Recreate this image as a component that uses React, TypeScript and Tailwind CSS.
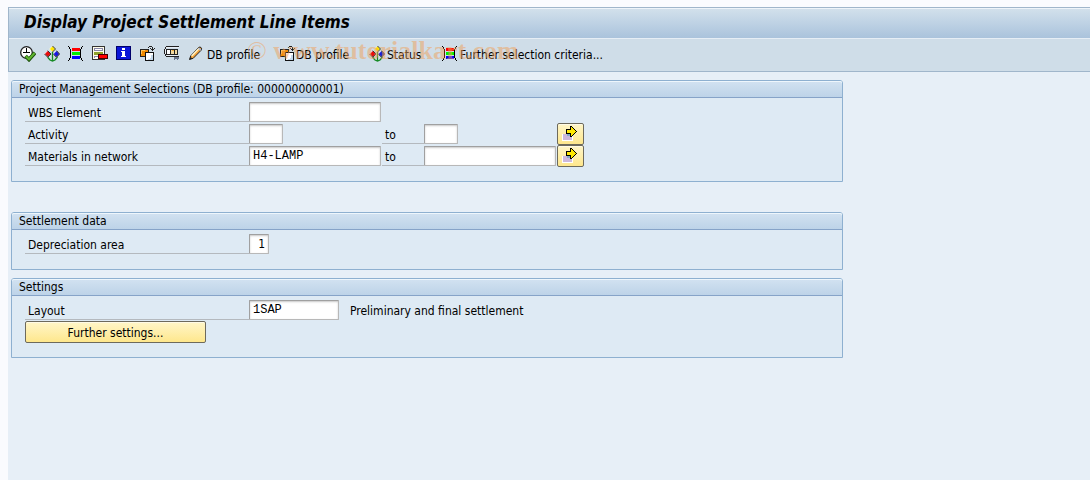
import { useState, type ChangeEvent, type ReactNode } from "react";

function Pixels({ children }: { children: ReactNode }) {
  return (
    <svg viewBox="0 0 16 16" aria-hidden="true" shapeRendering="crispEdges" className="h-4 w-4 shrink-0">
      {children}
    </svg>
  );
}

function ExecuteIcon() {
  return (
    <svg viewBox="0 0 16 16" aria-hidden="true" className="h-4 w-4 shrink-0">
      <circle cx="6.5" cy="6.5" r="5.8" fill="#fff" stroke="#222" strokeWidth="1.3" />
      <path d="M6.5 2v5M3 6.5h7" stroke="#000" fill="none" />
      <path d="M5.5 10l3.5 3.5L15 6.8" fill="none" stroke="#1d4f0c" strokeWidth="3.8" />
      <path d="M5.8 10.2L9 13.2l5.6-6.2" fill="none" stroke="#5fb52f" strokeWidth="2" />
    </svg>
  );
}

function StatusIcon() {
  return (
    <svg viewBox="0 0 16 16" aria-hidden="true" className="h-4 w-4 shrink-0">
      <path d="M8.5 6v9.5M3.5 11l2.5 3 2.5 1L11 14l2.5-3" fill="none" stroke="#168a24" strokeWidth="1.3" />
      <path d="M8.5 0L5.5 3l3 3 3-3z" fill="#ffe600" stroke="#fff" strokeWidth="0.6" />
      <path d="M8.5 0l3 3-3 3" fill="none" stroke="#333" />
      <path d="M3.7 4.7L.5 8l3.2 3.2L7 8z" fill="#e80c0c" stroke="#fff" strokeWidth="0.6" />
      <path d="M3.7 4.7L7 8l-3.3 3.2L.5 8" fill="none" stroke="#333" />
      <path d="M12.5 4.7L9.3 8l3.2 3.2L15.6 8z" fill="#1616e8" stroke="#fff" strokeWidth="0.6" />
      <path d="M12.5 4.7L15.5 8l-3 3.2L9.3 8" fill="none" stroke="#222" />
    </svg>
  );
}

function SelectionIcon() {
  return (
    <Pixels>
      <path d="M0 0h1v1h-1zM1 1h1v2h-1zM2 3h1v9h-1zM1 12h1v2h-1zM0 14h1v1h-1zM15 0h-1v1h1zM14 1h-1v2h1zM13 3h-1v9h1zM14 12h-1v2h1zM15 14h-1v1h1z" fill="#000" />
      <path d="M4 2h8v3h-8z" fill="#f00" />
      <path d="M4 6h8v3h-8z" fill="#0e0" />
      <path d="M4 10h8v3h-8z" fill="#00f" />
    </Pixels>
  );
}

function DeleteRowIcon() {
  return (
    <Pixels>
      <path d="M0 0h13v14h-13z" fill="#333" />
      <path d="M1 1h11v12h-11z" fill="#fffde9" />
      <path d="M2 2h9v3h-9z" fill="#8886a8" />
      <path d="M3 3h7v1h-7z" fill="#fff" />
      <path d="M2 6h9v3h-9z" fill="#8fa32c" />
      <path d="M2 10h4v2h-4z" fill="#8b89aa" />
      <path d="M3 11h3v1h-3z" fill="#fff" />
      <path d="M6 8h10v5h-10z" fill="#400" />
      <path d="M7 9h8v3h-8z" fill="#f00" />
    </Pixels>
  );
}

function InfoIcon() {
  return (
    <Pixels>
      <path d="M0 0h15v14h-15z" fill="#00006c" />
      <path d="M1 1h13v12h-13z" fill="#0a16d8" />
      <path d="M6 2h3v2h-3zM5 5h4v5h1v1h-5v-1h1v-4h-1z" fill="#fff" />
    </Pixels>
  );
}

function VariantIcon() {
  return (
    <Pixels>
      <path d="M0 3h9v8h-9z" fill="#222" />
      <path d="M1 4h7v6h-7z" fill="#f08a00" />
      <path d="M1 4h4v1h-3v3h-1z" fill="#ffc45c" />
      <path d="M5 6h9v9h-9z" fill="#111" />
      <path d="M6 7h7v7h-7z" fill="#fff" />
      <path d="M11 9h2v5h-5v-1h2v-1h1z" fill="#c3d8ea" />
      <path d="M8 1h1v1h-1zM9 0h3v1h-3zM12 1h1v2h-1zM10 2h1v1h-1zM11 3h3v1h-3zM14 2h1v1h-1zM12 4h1v1h-1z" fill="#222" />
    </Pixels>
  );
}

function TransportIcon() {
  return (
    <Pixels>
      <path d="M2 0h13v1h-13zM1 1h1v2h-1zM0 3h1v5h-1zM1 8h1v2h-1zM2 10h13v1h-13z" fill="#222" />
      <path d="M2 1h13v1h-13zM1 3h1v5h-1zM2 9h12v1h-12z" fill="#e9eef6" />
      <path d="M2 3h12v6h-12z" fill="#222" />
      <path d="M3 4h3v4h-3z" fill="#fff" />
      <path d="M7 4h3v4h-3zM11 4h2v4h-2z" fill="#f2d9a0" />
      <path d="M8 4h2v1h-2z" fill="#eda93a" />
      <path d="M10 11h5v2h-5zM10 13h1v1h-1zM13 13h1v1h-1z" fill="#69758e" />
    </Pixels>
  );
}

function PencilIcon() {
  return (
    <svg viewBox="0 0 16 16" aria-hidden="true" className="h-4 w-4 shrink-0">
      <path d="M1.5 13.5l1.2-3.6L10.5 1.6q1.5-1.2 2.6 0t0 2.7L5.2 12.3z" fill="#f3a33c" stroke="#222" />
      <path d="M3.7 10l7.2-7.5" stroke="#fff3c6" strokeWidth="1.6" />
      <path d="M1.5 13.5l1-2.6 2 1.6z" fill="#222" />
      <path d="M10.8 2.2l2 2" stroke="#a9b9d8" strokeWidth="1.6" />
    </svg>
  );
}

function MultipleIcon() {
  return (
    <Pixels>
      <path d="M0 8h11v7h-11z" fill="#fff" />
      <path d="M1 8h9v6h-9z" fill="#cdb9dc" />
      <path d="M5 8h5v2h-5z" fill="#86aac4" />
      <path d="M8 0h2v1h1v1h1v1h1v1h1v1h1v1h-1v1h-1v1h-1v1h-1v1h-1v1h-2v-3h-4v-5h4z" fill="#000" />
      <path d="M9 1h1v1h1v1h1v1h1v1h1v1h-1v1h-1v1h-1v1h-1v1h-1v-3h-4v-3h4z" fill="#ffe800" />
    </Pixels>
  );
}

function Group({ title, className = "", children }: { title: string; className?: string; children: ReactNode }) {
  return (
    <section className={`w-full max-w-[832px] rounded-t-[3px] border border-[#8eb0d0] bg-[#deeaf4] ${className}`}>
      <h2 className="h-[17px] rounded-t-[2px] border-b border-[#86a3c8] bg-linear-to-b from-[#d2e2f1] to-[#bdd3e8] pl-[7px] leading-4 shadow-[inset_0_1px_0_#eef6fc]">
        {title}
      </h2>
      <div className="pt-[3px] pb-[14px] pl-[13px]">{children}</div>
    </section>
  );
}

const ROW = "grid h-[22px] grid-cols-[224px_133px_42px_133px_auto] items-center";
const LABEL = "flex h-5 items-center border-b border-[#b4b9be] pt-[2px] pl-[3px]";
const FIELD =
  "h-5 rounded-[1px] border border-[#a0a0a0] border-r-[#b8b8b8] border-b-[#b8b8b8] bg-white px-[3px] text-xs shadow-[inset_0_1px_2px_#c8c8c8] outline-none";
const MONO = "font-['Liberation_Mono',monospace]";
const BUTTON =
  "rounded-[2px] border border-[#6d6a5c] bg-linear-to-b from-[#fff6c8] to-[#fee78c] shadow-[inset_0_1px_0_#fffbe6]";

function MultipleButton({ label }: { label: string }) {
  return (
    <button type="button" aria-label={label} className={`flex h-[22px] w-[27px] items-center pl-1 ${BUTTON}`}>
      <MultipleIcon />
    </button>
  );
}

const ICON_TOOLS = [
  { label: "Execute", icon: <ExecuteIcon /> },
  { label: "Status", icon: <StatusIcon /> },
  { label: "Dynamic selections", icon: <SelectionIcon /> },
  { label: "Delete row", icon: <DeleteRowIcon /> },
  { label: "Information", icon: <InfoIcon /> },
  { label: "Get variant", icon: <VariantIcon /> },
  { label: "Transport", icon: <TransportIcon /> },
];

export default function App() {
  const [form, setForm] = useState({
    wbs: "",
    activityFrom: "",
    activityTo: "",
    materialFrom: "H4-LAMP",
    materialTo: "",
    area: "1",
    layout: "1SAP",
  });

  function field(name: keyof typeof form) {
    return {
      id: name,
      value: form[name],
      onChange: (e: ChangeEvent<HTMLInputElement>) => setForm({ ...form, [name]: e.target.value }),
    };
  }

  return (
    <div className="flex min-h-screen flex-col bg-[#fafbfe] pt-[7px] pl-2 font-['DejaVu_Sans_Condensed','DejaVu_Sans',sans-serif] text-xs text-black">
      <div className="flex-1 bg-[#e7eff7]">
        <header className="border border-r-0 border-[#a0b6cb] bg-[#cfdde8]">
          <h1 className="flex h-[30px] items-center bg-linear-to-b from-[#d3e1ec] to-[#aac3dc] pb-[2px] pl-[15px] text-[17px] font-bold italic shadow-[inset_0_1px_0_#eef4f9]">
            Display Project Settlement Line Items
          </h1>
          <div className="relative flex h-[33px] items-center border-t border-[#e6eef5] pb-[2px] pl-[11px] whitespace-nowrap">
            <div className="flex gap-2">
              {ICON_TOOLS.map((t) => (
                <button key={t.label} type="button" aria-label={t.label}>
                  {t.icon}
                </button>
              ))}
            </div>
            <button type="button" className="ml-2 flex w-[92px] items-center gap-[3px]">
              <PencilIcon />
              <span className="pt-px">DB profile</span>
            </button>
            <button type="button" className="flex w-[89px] items-center">
              <VariantIcon />
              <span className="pt-px">DB profile</span>
            </button>
            <button type="button" className="flex w-[73px] items-center gap-[2px]">
              <StatusIcon />
              <span className="pt-px">Status</span>
            </button>
            <button type="button" className="flex items-center gap-[2px]">
              <SelectionIcon />
              <span className="pt-px">Further selection criteria...</span>
            </button>
            <span className="pointer-events-none absolute top-[-4px] left-[238px] font-['Liberation_Serif',serif] text-[26px] leading-8 text-[#f0a058]/50">
              © <b>www.tutorialkart.com</b>
            </span>
          </div>
        </header>

        <main className="pt-2 pl-[3px]">
          <Group title="Project Management Selections (DB profile: 000000000001)">
            <div className={ROW}>
              <label htmlFor="wbs" className={LABEL}>WBS Element</label>
              <input {...field("wbs")} className={`w-[132px] ${MONO} ${FIELD}`} />
            </div>
            <div className={ROW}>
              <label htmlFor="activityFrom" className={LABEL}>Activity</label>
              <input {...field("activityFrom")} className={`w-[34px] ${MONO} ${FIELD}`} />
              <label htmlFor="activityTo" className={LABEL}>to</label>
              <input {...field("activityTo")} className={`w-[34px] ${MONO} ${FIELD}`} />
              <MultipleButton label="Multiple selection for activity" />
            </div>
            <div className={ROW}>
              <label htmlFor="materialFrom" className={LABEL}>Materials in network</label>
              <input {...field("materialFrom")} className={`w-[132px] ${MONO} ${FIELD}`} />
              <label htmlFor="materialTo" className={LABEL}>to</label>
              <input {...field("materialTo")} className={`w-[132px] ${MONO} ${FIELD}`} />
              <MultipleButton label="Multiple selection for materials" />
            </div>
          </Group>

          <Group title="Settlement data" className="mt-[30px]">
            <div className={ROW}>
              <label htmlFor="area" className={LABEL}>Depreciation area</label>
              <input {...field("area")} className={`w-5 text-right ${FIELD}`} />
            </div>
          </Group>

          <Group title="Settings" className="mt-2">
            <div className="flex h-[22px] items-center">
              <label htmlFor="layout" className={`w-[224px] ${LABEL}`}>Layout</label>
              <input {...field("layout")} className={`w-[90px] ${MONO} ${FIELD}`} />
              <span className="pt-px pl-[11px]">Preliminary and final settlement</span>
            </div>
            <button type="button" className={`block h-[22px] w-[181px] pt-px ${BUTTON}`}>Further settings...</button>
          </Group>
        </main>
      </div>
    </div>
  );
}
